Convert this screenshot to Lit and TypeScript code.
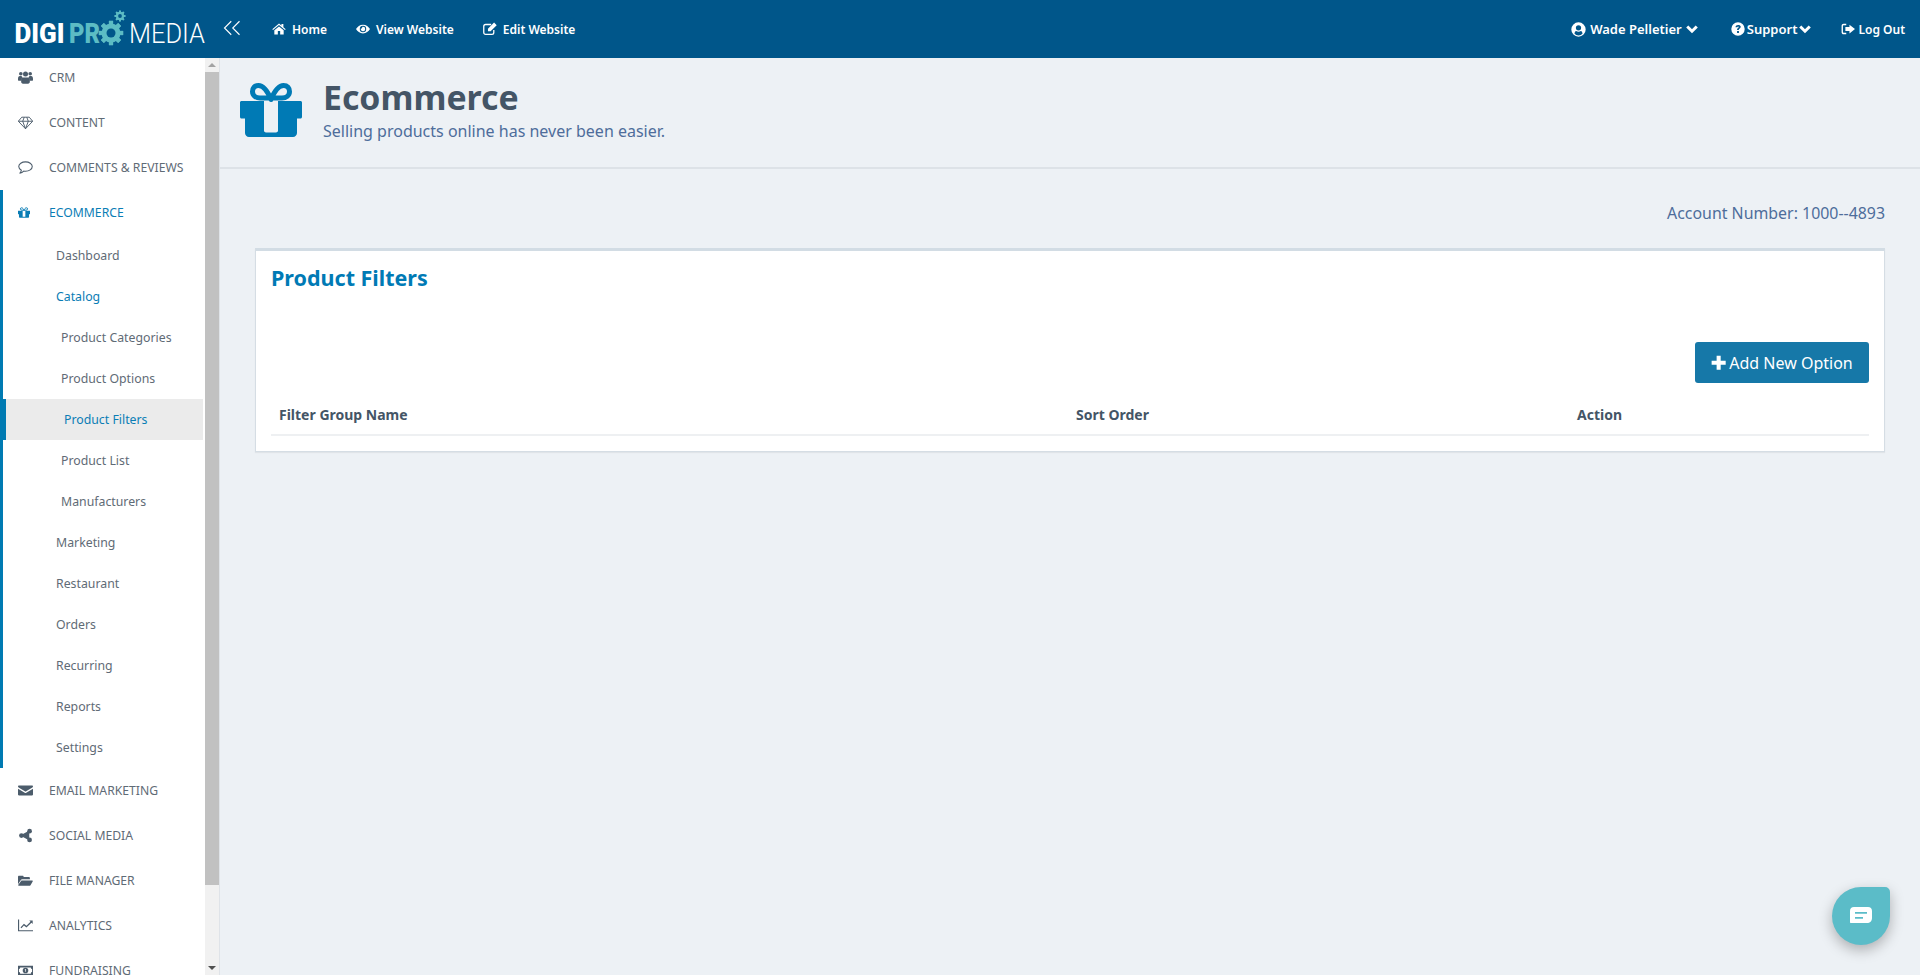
import { LitElement, html, css, svg } from "lit";
import { customElement } from "lit/decorators.js";

const P: Record<string, any> = {
  users: svg`<circle cx="4.500" cy="6" r="2.900"/><circle cx="19.500" cy="6" r="2.900"/><circle cx="12" cy="6.500" r="4"/><path d="M0 14.500c0-3 1-5 3-5h2.600c.5 1 1 1.600 1.800 2.300C6 12.700 5 14.500 5 17H1c-.6 0-1-.2-1-.5zM24 14.500c0-3-1-5-3-5h-2.600c-.5 1-1 1.600-1.800 2.300C18 12.700 19 14.500 19 17h4c.6 0 1-.2 1-.5zM8.500 12h7c2 0 3.500 2.300 3.500 6.500 0 2.200-1.200 3.500-3 3.500H8c-1.800 0-3-1.300-3-3.500 0-4.200 1.500-6.500 3.500-6.500z"/>`,
  diamond: svg`<path fill="none" stroke="currentColor" stroke-width="1.500" stroke-linejoin="round" d="M6 3.500h12l5.500 6.500L12 22 .5 10zM.5 10h23M7.500 10 12 22l4.500-12M7.500 10 10 3.500M16.500 10 14 3.500"/>`,
  comment: svg`<path fill="none" stroke="currentColor" stroke-width="1.700" stroke-linejoin="round" d="M12 3c5.800 0 10.800 3.200 10.800 7.500s-5 7.500-10.800 7.500c-1 0-2-.1-2.800-.3C7.500 19.500 5 20.800 3 21c1.200-1.200 2.200-2.800 2.400-4.500C3 15 1.200 13 1.200 10.500 1.200 6.200 6.200 3 12 3z"/>`,
  envelope: svg`<path d="M0 5.500C0 4.700.7 4 1.500 4h21c.8 0 1.500.7 1.500 1.500 0 .6-.4 1.200-1 1.600l-10 6.200c-.6.400-1.400.4-2 0L1 7.100C.4 6.700 0 6.100 0 5.500zM0 9l10.800 6.500c.7.500 1.700.5 2.400 0L24 9v9.500c0 .8-.7 1.500-1.500 1.500h-21C.7 20 0 19.300 0 18.500z"/>`,
  share: svg`<circle cx="18.500" cy="5" r="3.800"/><circle cx="18.500" cy="19" r="3.800"/><circle cx="5.500" cy="12" r="3.800"/><path stroke="currentColor" stroke-width="2.200" d="M18 5.500 6 12l12 6.500"/>`,
  folder: svg`<path d="M0 18V6c0-1 .7-1.700 1.600-1.700h5.800c1 0 1.600.7 1.600 1.700v.3h8.400c1 0 1.600.7 1.600 1.700V10H7c-1.300 0-2.400.7-3 1.800zM5.500 12h17c.9 0 1.400.9 1 1.700L20 19.500c-.4.600-1 1-1.700 1H1.500c-.9 0-1.400-.9-1-1.700z"/>`,
  chart: svg`<path d="M0 2.500h1.800V19.500H24V21.300H0z"/><path d="M4 15l5.500-6 4 3.500L20 6l-2-2h5.500v5.500l-2-2-8 7.800-4-3.500L5.500 16.500z"/>`,
  money: svg`<path fill-rule="evenodd" d="M0 4.500h24v15H0zM3.500 7c0 1.400-.9 2.500-2 2.500v5c1.100 0 2 1.100 2 2.500h17c0-1.400.9-2.500 2-2.500v-5c-1.100 0-2-1.100-2-2.500z"/><path fill-rule="evenodd" d="M12 7.500a4.500 4.500 0 1 1 0 9 4.500 4.500 0 0 1 0-9zM11 10v1h.7v3h1.100v-4z"/>`,
  home: svg`<path d="M12 2.500.5 12.300l1.300 1.500L12 5.200l10.200 8.600 1.300-1.500-4-3.400V3.500h-3.300v2.700zM4 14.200 12 7.500l8 6.700V21.500h-6v-6h-4v6H4z"/>`,
  eye: svg`<path fill-rule="evenodd" d="M12 4.500c5.500 0 9.500 3.500 12 7.500-2.500 4-6.500 7.500-12 7.500S2.500 16 0 12c2.500-4 6.500-7.500 12-7.500zM12 6.500a5.500 5.500 0 0 0-5.500 5.500 5.500 5.500 0 0 0 11 0A5.500 5.500 0 0 0 12 6.500z"/><path d="M12 8.200a3.800 3.800 0 1 1-3.700 3c.9.500 2.900-.6 2.300-2.700.4-.2.900-.3 1.400-.3z"/>`,
  edit: svg`<path fill="none" stroke="currentColor" stroke-width="2.200" d="M18.500 13.500V18c0 1.900-1.300 3.200-3.200 3.200H4.500c-1.900 0-3.200-1.300-3.200-3.200V7.500c0-1.900 1.300-3.200 3.200-3.200H14"/><path d="M8.500 11.500 19 1l4.500 4.500L13 16H8.500zM10.500 14v-1.500L18.500 4.600l.9.900L11.500 14z"/>`,
  user: svg`<path fill-rule="evenodd" d="M12 .5a11.500 11.500 0 1 1 0 23 11.500 11.500 0 0 1 0-23zm0 4.500a4.200 4.200 0 1 0 0 8.400A4.200 4.200 0 0 0 12 5zm-6.500 13.500c1.500 1.900 3.800 3 6.500 3s5-1.100 6.500-3c-.3-2.500-1.300-4-2.800-4.300-1 .8-2.300 1.300-3.700 1.300s-2.700-.5-3.700-1.300c-1.500.3-2.500 1.800-2.800 4.300z"/>`,
  chev: svg`<path fill="none" stroke="currentColor" stroke-width="6" d="M2.500 7l9.500 9.500L21.500 7"/>`,
  help: svg`<path fill-rule="evenodd" d="M12 .5a11.500 11.500 0 1 1 0 23 11.500 11.500 0 0 1 0-23zM7.800 9h3.200c0-1 .4-1.500 1.200-1.500.7 0 1.200.4 1.200 1 0 1.400-3 1.700-3 4.500v.5h2.900c0-2 3.400-2.300 3.400-5.200C16.700 6 14.500 5 12.200 5 9.800 5 7.800 6.500 7.800 9zm2.600 6.500v3.200h3.200v-3.200z"/>`,
  logout: svg`<path d="M9 3v2.500H5c-1 0-1.700.7-1.700 1.700v9.600c0 1 .7 1.700 1.700 1.700h4V21H4.500C2.500 21 1 19.500 1 17.500v-11C1 4.500 2.500 3 4.500 3z"/><path d="M14.500 4.500 24 12l-9.500 7.500V15.500H7.500v-7h7z"/>`,
  plus: svg`<path d="M9 1h6.500v8h8v6.500h-8v8H9v-8H1V9h8z"/>`,
  back: svg`<path fill="none" stroke="currentColor" stroke-width="1.500" d="M11 3 2 12l9 9M22 3l-9 9 9 9"/>`,
};
const icon = (n: string, cls = "") => html`<svg class="i ${cls}" viewBox="0 0 24 24" fill="currentColor">${P[n]}</svg>`;

const gift = (cls: string) => html`<svg class="gift ${cls}" viewBox="0 0 62 54" fill="currentColor">
  <path fill-rule="evenodd" d="M1.500 18h59c.8 0 1.500.7 1.500 1.500V34c0 .8-.7 1.500-1.500 1.500H57V50c0 2.200-1.800 4-4 4H9c-2.200 0-4-1.800-4-4V35.500H1.500C.7 35.500 0 34.800 0 34V19.500C0 18.700.7 18 1.500 18zM24 18V47.500c0 1.100.9 2 2 2h10c1.100 0 2-.9 2-2V18z"/>
  <path fill="none" stroke="currentColor" stroke-width="5" stroke-linejoin="round" d="M31 16.500C27.500 8 24 2.500 18.500 2.500 14.500 2.500 12.500 5 12.500 8.500 12.500 12.500 16 15 20 15H42C46 15 49.500 12.500 49.500 8.500 49.500 5 47.500 2.500 43.500 2.500 38 2.500 34.500 8 31 16.500z"/>
</svg>`;

const gear = (cx: number, cy: number, r: number, hole: number) => {
  const teeth = [0, 45, 90, 135, 180, 225, 270, 315].map(
    (a) => svg`<rect x=${cx - r * 0.22} y=${cy - r * 1.28} width=${r * 0.44} height=${r * 2.56} transform="rotate(${a} ${cx} ${cy})"/>`
  );
  return svg`${teeth}<circle cx=${cx} cy=${cy} r=${r}/><circle cx=${cx} cy=${cy} r=${hole} fill="#00568a"/>`;
};

type Row = { t: string; ic?: string; k: string; on?: boolean };
const before: Row[] = [
  { t: "CRM", ic: "users", k: "top" },
  { t: "CONTENT", ic: "diamond", k: "top" },
  { t: "COMMENTS & REVIEWS", ic: "comment", k: "top" },
];
const group: Row[] = [
  { t: "ECOMMERCE", ic: "gift", k: "top", on: true },
  { t: "Dashboard", k: "sub" },
  { t: "Catalog", k: "sub", on: true },
  { t: "Product Categories", k: "leaf" },
  { t: "Product Options", k: "leaf" },
  { t: "Product Filters", k: "leaf cur", on: true },
  { t: "Product List", k: "leaf" },
  { t: "Manufacturers", k: "leaf" },
  { t: "Marketing", k: "sub" },
  { t: "Restaurant", k: "sub" },
  { t: "Orders", k: "sub" },
  { t: "Recurring", k: "sub" },
  { t: "Reports", k: "sub" },
  { t: "Settings", k: "sub" },
];
const after: Row[] = [
  { t: "EMAIL MARKETING", ic: "envelope", k: "top" },
  { t: "SOCIAL MEDIA", ic: "share", k: "top" },
  { t: "FILE MANAGER", ic: "folder", k: "top" },
  { t: "ANALYTICS", ic: "chart", k: "top" },
  { t: "FUNDRAISING", ic: "money", k: "top" },
];
const row = (r: Row) => html`<a class="row ${r.k} ${r.on ? "on" : ""}">
  ${r.ic ? html`<span class="ri">${r.ic === "gift" ? gift("sm") : icon(r.ic)}</span>` : ""}<span>${r.t}</span></a>`;

@customElement("app-root")
export class AppRoot extends LitElement {
  static styles = css`
    :host { display: block; width: 1920px; height: 975px; overflow: hidden; background: #edf1f5;
      font-family: "Noto Sans", sans-serif; color: #445566; }
    * { box-sizing: border-box; }
    .i { display: block; width: 14px; height: 14px; flex: none; }
    .gift { display: block; flex: none; }
    .bar { position: relative; z-index: 2; height: 58px; background: #00568a; color: #fff; display: flex; align-items: center;
      font-size: 12px; font-weight: 600; }
    .logo { width: 223px; height: 58px; display: block; flex: none; }
    .logo text { fill: #fff; font-family: "Roboto", sans-serif; font-size: 28.500px; }
    .logo .d { font-weight: 900; }
    .logo .p { font-weight: 900; fill: #5cbcc4; }
    .logo .m { font-weight: 300; }
    .logo .g { fill: #5cbcc4; }
    .back { width: 18px; height: 18px; margin-right: 31px; position: relative; top: -1px; }
    .nav { display: flex; align-items: center; gap: 6px; margin-right: 29px; white-space: nowrap; }
    .sp { flex: 1; }
    .right { font-size: 13px; }
    .user { gap: 4px; margin-right: 33px; }
    .user .i:first-child { width: 15px; height: 15px; }
    .chev { width: 12px; height: 12px; }
    .sup { gap: 2px; margin-right: 30px; }
    .out { gap: 3px; margin-right: 15px; font-size: 12px; }
    .body { display: flex; height: 917px; overflow: hidden; }
    .side { width: 205px; flex: none; background: #fff; overflow: hidden; }
    .list { margin-top: -3.500px; }
    .row { display: flex; align-items: center; white-space: nowrap; color: #5f6b76; }
    .row.top { height: 45px; font-size: 12.200px; padding-left: 18px; }
    .row.top .ri { width: 31px; display: block; color: #4c5c6b; }
    .row.top .i { width: 15px; height: 15px; }
    .row.sub, .row.leaf { height: 41px; font-size: 12.300px; }
    .row.sub { padding-left: 56px; }
    .row.leaf { padding-left: 61px; }
    .row.on { color: #0a7db5; }
    .row.on .ri { color: #0a7db5; }
    .sm { width: 12px; height: 11px; }
    .group { border-left: 3px solid #007ab2; }
    .group .row.top { padding-left: 15px; }
    .group .row.sub { padding-left: 53px; }
    .group .row.leaf { padding-left: 58px; }
    .group .row.cur { background: #ebebeb; border-left: 3px solid #007ab2; width: 200px; padding-left: 58px; }
    .scroll { width: 15px; flex: none; background: #f1f1f1; border-right: 1px solid #dfe3e8; display: flex; flex-direction: column; }
    .arrow { height: 14px; flex: none; display: flex; align-items: center; justify-content: center; }
    .arrow i { display: block; width: 0; height: 0; border-left: 4px solid transparent; border-right: 4px solid transparent; }
    .arrow.up i { border-bottom: 4px solid #a3a3a3; }
    .arrow.dn i { border-top: 4px solid #505050; }
    .thumb { height: 813px; background: #c1c1c1; flex: none; }
    .gap { flex: 1; }
    .main { flex: 1; min-width: 0; }
    .head { height: 111px; border-bottom: 2px solid #dde2e7; padding: 25px 0 0 20px; display: flex; gap: 21px; }
    .head .gift { width: 62px; height: 54px; color: #007ab5; }
    h1 { margin: -2px 0 0; font-size: 33.800px; line-height: 32px; font-weight: 700; color: #445566; }
    .head p { margin: 0; font-size: 16px; line-height: 20px; color: #4e6d9b; padding-top: 8px; }
    .acct { text-align: right; padding: 33px 35px 0 0; font-size: 15.900px; line-height: 22px; color: #4e6d9b; }
    .card { margin: 24px 35px 0 35px; height: 204px; background: #fff; border: 1px solid #d5dde4; border-top: 3px solid #d2dce4;
      padding: 0 15px; box-shadow: 0 1px 1px rgba(0,0,0,.05); }
    h2 { margin: 0; font-size: 21.500px; line-height: 28px; font-weight: 700; color: #007ab5; padding-top: 13px; height: 91px; }
    .tools { display: flex; justify-content: flex-end; }
    .btn { width: 174px; height: 41px; background: #1678a8; color: #fff; border-radius: 3px; border: 0; display: flex;
      align-items: center; justify-content: center; gap: 3px; font: 400 16px "Noto Sans", sans-serif; }
    .btn .i { width: 15px; height: 15px; }
    .thead { display: grid; grid-template-columns: 797px 501px 1fr; height: 53px; align-items: center; padding: 11px 0 0 8px;
      font-size: 14px; font-weight: 700; color: #445566; border-bottom: 2px solid #eef0f2; }
    .chat { position: absolute; left: 1832px; top: 887px; width: 58px; height: 58px; background: #5bbcc8; z-index: 3;
      border-radius: 50% 5px 50% 50%; box-shadow: 0 5px 14px rgba(0,0,0,.28); display: flex; align-items: center; justify-content: center; }
    .chat svg { width: 24px; height: 20px; display: block; }
  `;

  render() {
    return html`
      <header class="bar">
        <svg class="logo" viewBox="0 0 223 58">
          <text class="d" x="14.500" y="43" textLength="50" lengthAdjust="spacingAndGlyphs">DIGI</text>
          <text class="p" x="69" y="43" textLength="31" lengthAdjust="spacingAndGlyphs">PR</text>
          <g class="g">${gear(111, 33, 9.500, 4.500)}${gear(120, 16, 4.200, 1.900)}</g>
          <text class="m" x="129" y="43" textLength="76" lengthAdjust="spacingAndGlyphs">MEDIA</text>
        </svg>
        ${icon("back", "back")}
        <a class="nav">${icon("home")}<span>Home</span></a>
        <a class="nav">${icon("eye")}<span>View Website</span></a>
        <a class="nav">${icon("edit")}<span>Edit Website</span></a>
        <span class="sp"></span>
        <a class="nav right user">${icon("user")}<span>Wade Pelletier</span>${icon("chev", "chev")}</a>
        <a class="nav right sup">${icon("help")}<span>Support</span>${icon("chev", "chev")}</a>
        <a class="nav out">${icon("logout")}<span>Log Out</span></a>
      </header>
      <div class="body">
        <aside class="side"><div class="list">
          ${before.map(row)}
          <div class="group">${group.map(row)}</div>
          ${after.map(row)}
        </div></aside>
        <div class="scroll">
          <div class="arrow up"><i></i></div>
          <div class="thumb"></div>
          <div class="gap"></div>
          <div class="arrow dn"><i></i></div>
        </div>
        <main class="main">
          <section class="head">
            ${gift("")}
            <div><h1>Ecommerce</h1><p>Selling products online has never been easier.</p></div>
          </section>
          <div class="acct">Account Number: 1000--4893</div>
          <section class="card">
            <h2>Product Filters</h2>
            <div class="tools"><button class="btn">${icon("plus")}<span>Add New Option</span></button></div>
            <div class="thead"><span>Filter Group Name</span><span>Sort Order</span><span>Action</span></div>
          </section>
        </main>
      </div>
      <div class="chat"><svg viewBox="0 0 24 20"><path fill="#fff" fill-rule="evenodd" d="M5 1h14c2.500 0 4 1.500 4 4v7c0 3-2 5-5 5H2c-.8 0-1-.6-1-1V5c0-2.500 1.500-4 4-4zM6 6v1.800h12V6zm0 5v1.800h8V11z"/></svg></div>
    `;
  }
}
